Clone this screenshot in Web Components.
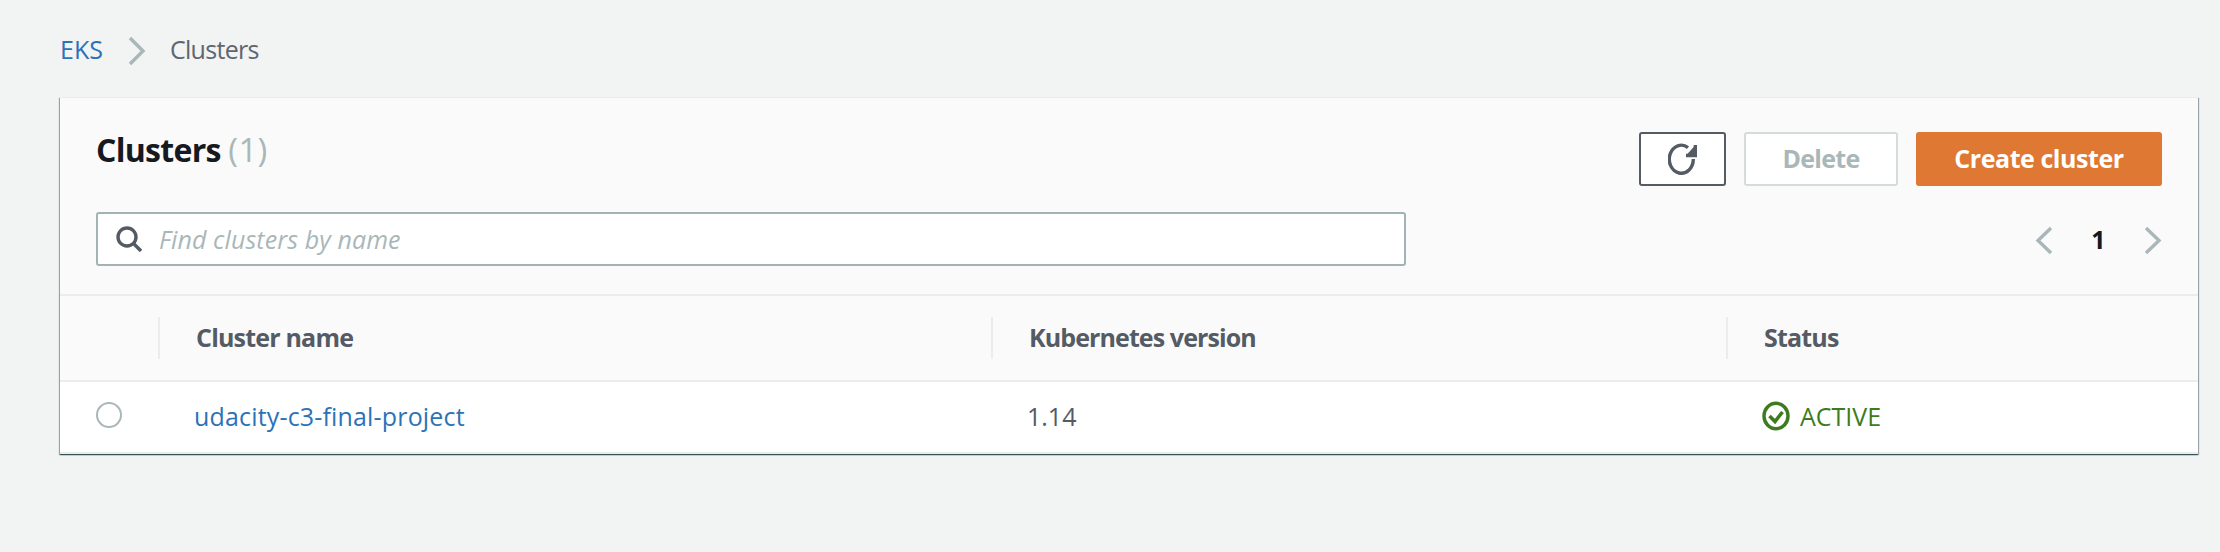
<!DOCTYPE html>
<html><head><meta charset="utf-8"><style>
html,body{margin:0;padding:0;background:#f2f3f3}
body{width:2220px;height:552px;overflow:hidden;font-family:"Open Sans","Noto Sans",sans-serif;font-size:25px;color:#545b64}
</style></head><body>
<eks-page>
<eks-breadcrumb slot="crumb"><a slot="l">EKS</a><span>Clusters</span></eks-breadcrumb>
<eks-panel></eks-panel>
</eks-page>
<script>
function def(name,html){customElements.define(name,class extends HTMLElement{constructor(){super();this.attachShadow({mode:'open'}).innerHTML=html}})}
def('eks-page',`<style>:host{display:block;padding:30px 22px 0 60px}</style><slot name="crumb"></slot><slot></slot>`);
def('eks-breadcrumb',`<style>:host{display:flex;align-items:center;height:38px;margin:0 0 29px 0;font-size:25px;color:#5f6670}
::slotted(a){color:#2b73b7;letter-spacing:0}::slotted(span){color:#5f6670;letter-spacing:-.7px}
svg{margin:4px 24px 0 25px;display:block}</style>
<slot name="l"></slot><svg width="18" height="30" viewBox="0 0 18 30" fill="none" stroke="#aab7b8" stroke-width="3.4"><path d="M2 2l13 13L2 28"/></svg><slot></slot>`);
def('eks-button',`<style>:host{display:flex;align-items:center;justify-content:center;box-sizing:border-box;height:54px;padding-bottom:3px;border-radius:3px;border:2px solid #545b64;background:#fff;font-weight:700;font-size:25px;color:#545b64}
:host([kind=dis]){border-color:#d5dbdb;color:#aab7b8;letter-spacing:-.7px}
:host([kind=pri]){border-color:#df7832;background:#df7832;color:#fff;letter-spacing:-.45px}</style><slot></slot>`);
def('eks-search',`<style>:host{display:flex;align-items:center;box-sizing:border-box;width:1310px;height:54px;border:2px solid #a3b2b3;border-radius:3px;background:#fff;padding-left:18px;gap:17px;font-style:italic;font-size:25px;letter-spacing:.1px;color:#aab7b8}svg{display:block}</style>
<svg width="26" height="26" viewBox="0 0 26 26" fill="none" stroke="#545b64" stroke-width="3.4"><circle cx="11" cy="11" r="9"/><path d="M17 17l8 8"/></svg><span>Find clusters by name</span>`);
def('eks-pager',`<style>:host{display:flex;align-items:center;height:36px;font-weight:700;color:#16191f;font-size:25px}svg{display:block}span{width:91px;text-align:center;padding-bottom:2px}</style>
<svg width="18" height="29" viewBox="0 0 18 29" fill="none" stroke="#aab7b8" stroke-width="3.4"><path d="M16 2 3 14.5 16 27"/></svg><span>1</span><svg width="18" height="29" viewBox="0 0 18 29" fill="none" stroke="#aab7b8" stroke-width="3.4"><path d="M2 2l13 12.5L2 27"/></svg>`);
def('eks-table',`<style>:host{display:block}
.r{display:grid;grid-template-columns:98px 833px 735px 1fr}
.h{height:86px;box-sizing:border-box;align-items:center;border-bottom:2px solid #eaeded;background:#fafafa;font-weight:700;font-size:25px;color:#545b64}
.h>div{height:42px;display:flex;align-items:center;padding:0 0 2px 36px;border-left:2px solid #eaeded;box-sizing:border-box}
.h>div:first-child{border:0}
.b{height:72px;box-sizing:border-box;border-bottom:2px solid #eaeded;align-items:center;background:#fff;font-size:25px}
.b>div{padding:0 0 2px 36px;display:flex;align-items:center;gap:10px}
.radio{box-sizing:border-box;width:26px;height:26px;border:2px solid #aab7b8;border-radius:50%;margin-bottom:2px}
a{color:#2b73b7;letter-spacing:.17px}.ok{color:#3d7b1f}svg{display:block}</style>
<div class="r h"><div></div><div style="letter-spacing:-.8px">Cluster name</div><div style="letter-spacing:-.9px">Kubernetes version</div><div style="letter-spacing:-.8px">Status</div></div>
<div class="r b"><div><div class="radio"></div></div><div><a>udacity-c3-final-project</a></div><div>1.14</div><div class="ok"><svg width="28" height="30" viewBox="0 0 28 30" fill="none" stroke="#3d7b1f"><ellipse cx="14" cy="15" rx="12" ry="12.7" stroke-width="3.4"/><path d="M7.5 15l5.5 5.5 7.5-9.5" stroke-width="3.6"/></svg><span>ACTIVE</span></div></div>`);
def('eks-panel',`<style>:host{display:block;width:2138px;box-sizing:border-box;background:#fafafa;box-shadow:0 1px 1px 0 rgba(0,28,36,.5),1px 1px 1px 0 rgba(0,28,36,.3),-1px 1px 1px 0 rgba(0,28,36,.3);border-top:1px solid #eaeded}
.top{height:198px;box-sizing:border-box;border-bottom:2px solid #eaeded;padding:0 36px;display:grid;grid-template-columns:1fr auto;grid-template-rows:114px 54px;align-items:start}
h1{margin:32px 0 0;font-size:32px;font-weight:700;color:#16191f;letter-spacing:-.7px;line-height:40px}
h1 span{font-weight:500;color:#aab7b8;font-size:33px;letter-spacing:.3px}
.acts{display:flex;gap:18px;margin-top:34px}
.pg{justify-self:end;padding:10px 0 0 0}
svg{display:block}</style>
<div class="top"><h1>Clusters <span>(1)</span></h1>
<div class="acts"><eks-button style="width:87px;padding-bottom:0"><svg width="29" height="33" viewBox="0 0 29 33" fill="none" stroke="#545b64" stroke-width="3.4"><path d="M20 4.6A12 14 0 1 0 25.3 16"/><path d="M18 12.5h9.5V2" stroke-width="3.6"/><path d="M18 12.5h9.5V2z" fill="#545b64" stroke="none"/></svg></eks-button><eks-button kind="dis" style="width:154px">Delete</eks-button><eks-button kind="pri" style="width:246px">Create cluster</eks-button></div>
<eks-search></eks-search><eks-pager class="pg"></eks-pager></div>
<eks-table></eks-table>`);
</script>
</body></html>
